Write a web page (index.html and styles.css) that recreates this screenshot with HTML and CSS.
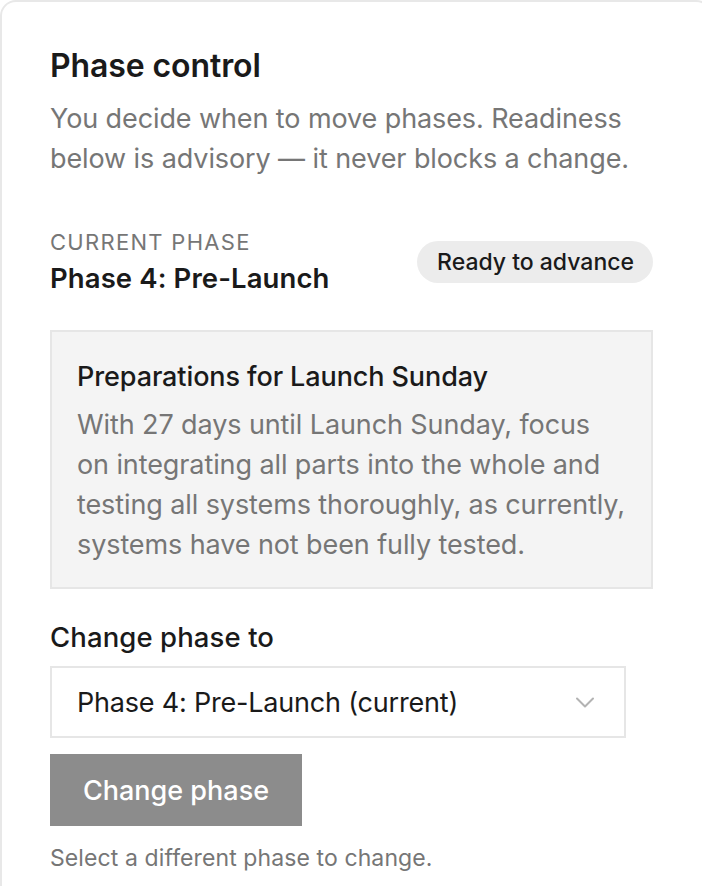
FILE: index.html
```html
<!DOCTYPE html>
<html lang="en">
<head>
    <meta charset="UTF-8">
    <meta name="viewport" content="width=device-width, initial-scale=1.0">
    <title>Phase control</title>
    <link rel="stylesheet" href="styles.css">
</head>
<body>
    <section class="card">
        <h2 class="card-title">Phase control</h2>
        <p class="card-intro">You decide when to move phases. Readiness below is advisory — it never blocks a change.</p>

        <div class="current">
            <div>
                <div class="current-label">CURRENT PHASE</div>
                <div class="current-name">Phase 4: Pre-Launch</div>
            </div>
            <span class="badge">Ready to advance</span>
        </div>

        <div class="phase-box">
            <h3 class="phase-box-title">Preparations for Launch Sunday</h3>
            <p class="phase-box-text">With 27 days until Launch Sunday, focus on integrating all parts into the whole and testing all systems thoroughly, as currently, systems have not been fully tested.</p>
        </div>

        <form class="change-form">
            <label for="phase" class="field-label">Change phase to</label>
            <div class="select-wrap">
                <select id="phase" name="phase">
                    <option value="4">Phase 4: Pre-Launch (current)</option>
                </select>
                <svg class="chevron" width="20" height="11" viewBox="0 0 20 11" fill="none">
                    <path d="M2 1.5l8 8 8-8" stroke="#b3b3b3" stroke-width="2" stroke-linecap="round" stroke-linejoin="round"/>
                </svg>
            </div>
            <button type="submit" class="btn" disabled>Change phase</button>
            <p class="hint">Select a different phase to change.</p>
        </form>
    </section>
</body>
</html>
```
FILE: styles.css
```css
html, body {
    overflow: hidden;
}
body {
    margin: 0;
    padding: 0;
    background-color: #fff;
    font-family: 'Inter', 'Noto Sans', sans-serif;
    color: #1a1a1a;
}
.card {
    box-sizing: border-box;
    width: 712px;
    min-height: 886px;
    border: 2px solid #e8e8e8;
    border-bottom: none;
    border-radius: 16px 16px 0 0;
    padding: 44px 48px 40px 48px;
}
.card-title {
    margin: 0;
    font-size: 32px;
    font-weight: 600;
    line-height: 40px;
    letter-spacing: -0.1px;
}
.card-intro {
    margin: 13px 0 0 0;
    font-size: 27px;
    line-height: 40px;
    color: #767676;
    letter-spacing: -0.1px;
}
.current {
    display: flex;
    justify-content: space-between;
    align-items: flex-start;
    margin-top: 48px;
    width: 603px;
}
.current-label {
    font-size: 22px;
    line-height: 30px;
    color: #767676;
    letter-spacing: 1.3px;
}
.current-name {
    font-size: 27.5px;
    font-weight: 600;
    line-height: 42px;
    letter-spacing: 0.1px;
}
.badge {
    margin-top: 14px;
    background-color: #ececec;
    border-radius: 21px;
    height: 42px;
    line-height: 42px;
    padding: 0 19px 0 20px;
    font-size: 23px;
    font-weight: 500;
}
.phase-box {
    margin-top: 31px;
    width: 603px;
    box-sizing: border-box;
    background-color: #f4f4f4;
    border: 2px solid #e6e6e6;
    padding: 25px 24px 22px 25px;
}
.phase-box-title {
    margin: 0;
    font-size: 27px;
    font-weight: 500;
    line-height: 40px;
    letter-spacing: -0.1px;
}
.phase-box-text {
    margin: 8px 0 0 0;
    font-size: 27px;
    line-height: 40px;
    color: #767676;
    letter-spacing: -0.1px;
}
.change-form {
    margin-top: 28px;
}
.field-label {
    display: block;
    font-size: 27.5px;
    font-weight: 500;
    line-height: 40px;
    letter-spacing: 0.1px;
}
.select-wrap {
    position: relative;
    width: 576px;
    margin-top: 9px;
}
.select-wrap select {
    display: block;
    width: 100%;
    height: 72px;
    border: 2px solid #e6e6e6;
    border-radius: 0;
    background-color: #fff;
    font-family: inherit;
    font-size: 27px;
    letter-spacing: -0.2px;
    color: #1a1a1a;
    padding: 0 25px;
    appearance: none;
    -webkit-appearance: none;
}
.chevron {
    position: absolute;
    right: 31px;
    top: 31px;
    pointer-events: none;
}
.btn {
    display: block;
    margin-top: 16px;
    height: 72px;
    width: 252px;
    border: none;
    border-radius: 0;
    background-color: #8c8c8c;
    color: #fff;
    font-family: inherit;
    font-size: 27px;
    font-weight: 500;
    letter-spacing: 0;
}
.hint {
    margin: 17px 0 0 0;
    font-size: 23px;
    line-height: 30px;
    color: #767676;
    letter-spacing: 0.1px;
}
```
